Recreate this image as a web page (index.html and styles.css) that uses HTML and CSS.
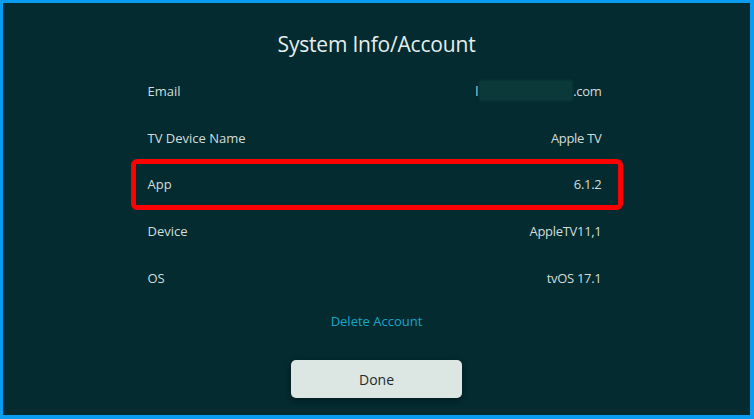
FILE: index.html
```html
<!DOCTYPE html>
<html>
<head>
<meta charset="utf-8">
<link rel="stylesheet" href="styles.css">
</head>
<body>
<main class="screen">
  <h1 class="title">System Info/Account</h1>
  <div class="list">
    <div class="row"><span class="label">Email</span><span class="value email"><span>l</span><span class="blur"></span><span>.com</span></span></div>
    <div class="row"><span class="label">TV Device Name</span><span class="value">Apple TV</span></div>
    <div class="row highlight"><span class="label">App</span><span class="value">6.1.2</span></div>
    <div class="row"><span class="label">Device</span><span class="value">AppleTV11,1</span></div>
    <div class="row"><span class="label">OS</span><span class="value">tvOS 17.1</span></div>
  </div>
  <a class="delete">Delete Account</a>
  <button class="done">Done</button>
</main>
</body>
</html>
```
FILE: styles.css
```css
html, body {
  margin: 0;
  padding: 0;
  width: 754px;
  height: 419px;
  overflow: hidden;
  background: #0a9cf0;
}
body {
  padding: 3px 4px 4px 3px;
  box-sizing: border-box;
  font-family: "Open Sans", "Noto Sans", sans-serif;
}
.screen {
  height: 412px;
  background: #032b30;
  display: flex;
  flex-direction: column;
  align-items: center;
}
.title {
  margin: 0;
  margin-top: 27px;
  height: 28px;
  line-height: 28px;
  font-size: 21px;
  font-weight: 400;
  color: #e6eeec;
  letter-spacing: -0.2px;
}
.list {
  margin-top: 9.5px;
  width: 488px;
  display: flex;
  flex-direction: column;
}
.row {
  height: 46.75px;
  display: flex;
  align-items: center;
  justify-content: space-between;
  padding: 0 19px 0 15px;
  font-size: 13px;
  color: #d3dedb;
  border-radius: 4px;
}
.value {
  letter-spacing: -0.3px;
}
.highlight {
  outline: 5px solid #ff0000;
  outline-offset: -3px;
}
.email {
  display: flex;
  align-items: center;
}
.blur {
  display: inline-block;
  width: 92px;
  height: 19px;
  background: #0b3838;
  box-shadow: 0 0 3px 1px #0b3838;
  margin: 0 1px 0 2px;
}
.delete {
  margin-top: 10px;
  height: 20px;
  line-height: 20px;
  font-size: 13px;
  color: #1aa5c6;
}
.done {
  margin-top: 29px;
  width: 171px;
  height: 38px;
  border: none;
  border-radius: 5px;
  background: #dce6e2;
  color: #222a2a;
  font-family: inherit;
  font-size: 14px;
  box-shadow: 0 2px 6px rgba(0,0,0,0.4);
}
```
